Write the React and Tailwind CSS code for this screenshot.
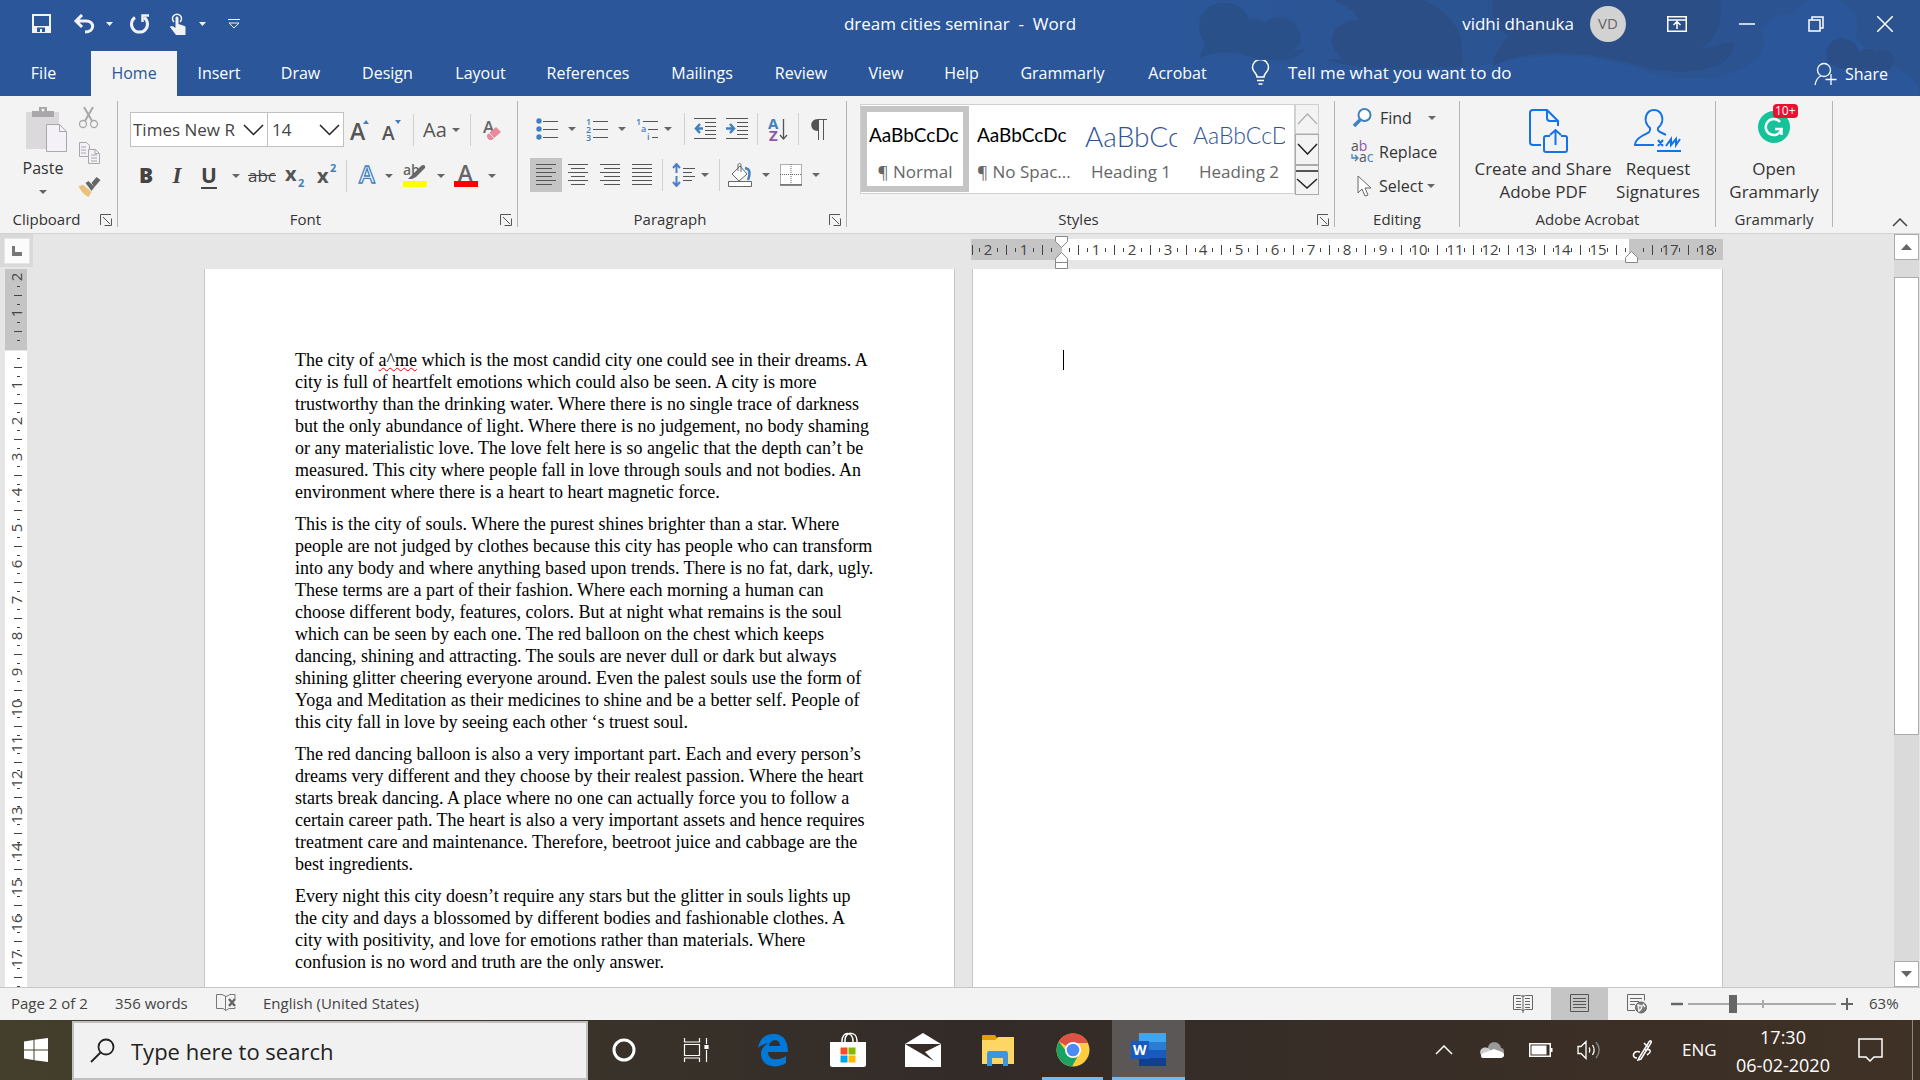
import React, { useState } from "react";

const tabs = [
  { name: "File", width: "w-[91px] pr-1" },
  { name: "Home", width: "w-[86px]" },
  { name: "Insert", width: "w-[84px]" },
  { name: "Draw", width: "w-[79px]" },
  { name: "Design", width: "w-[95px]" },
  { name: "Layout", width: "w-[91px]" },
  { name: "References", width: "w-[124px]" },
  { name: "Mailings", width: "w-[104px]" },
  { name: "Review", width: "w-[94px]" },
  { name: "View", width: "w-[76px]" },
  { name: "Help", width: "w-[75px]" },
  { name: "Grammarly", width: "w-[127px]" },
  { name: "Acrobat", width: "w-[103px]" },
];

const paragraphs = [
  [
    "city is full of heartfelt emotions which could also be seen. A city is more",
    "trustworthy than the drinking water. Where there is no single trace of darkness",
    "but the only abundance of light. Where there is no judgement, no body shaming",
    "or any materialistic love. The love felt here is so angelic that the depth can’t be",
    "measured. This city where people fall in love through souls and not bodies. An",
    "environment where there is a heart to heart magnetic force.",
  ],
  [
    "This is the city of souls. Where the purest shines brighter than a star. Where",
    "people are not judged by clothes because this city has people who can transform",
    "into any body and where anything based upon trends. There is no fat, dark, ugly.",
    "These terms are a part of their fashion. Where each morning a human can",
    "choose different body, features, colors. But at night what remains is the soul",
    "which can be seen by each one. The red balloon on the chest which keeps",
    "dancing, shining and attracting. The souls are never dull or dark but always",
    "shining glitter cheering everyone around. Even the palest souls use the form of",
    "Yoga and Meditation as their medicines to shine and be a better self. People of",
    "this city fall in love by seeing each other ‘s truest soul.",
  ],
  [
    "The red dancing balloon is also a very important part. Each and every person’s",
    "dreams very different and they choose by their realest passion. Where the heart",
    "starts break dancing. A place where no one can actually force you to follow a",
    "certain career path. The heart is also a very important assets and hence requires",
    "treatment care and maintenance. Therefore, beetroot juice and cabbage are the",
    "best ingredients.",
  ],
  [
    "Every night this city doesn’t require any stars but the glitter in souls lights up",
    "the city and days a blossomed by different bodies and fashionable clothes. A",
    "city with positivity, and love for emotions rather than materials. Where",
    "confusion is no word and truth are the only answer.",
  ],
];

const styles = [
  { name: "¶ Normal", sample: "AaBbCcDc", look: "text-[19px] text-black font-['Lato']" },
  { name: "¶ No Spac...", sample: "AaBbCcDc", look: "text-[19px] text-black font-['Lato']" },
  { name: "Heading 1", sample: "AaBbCc", look: "text-[28px] text-[#2f5496] font-light font-['Lato']" },
  { name: "Heading 2", sample: "AaBbCcD", look: "text-[23px] text-[#2f5496] font-light font-['Lato']" },
];

const Arrow = ({ className = "w-4" }) => (
  <button aria-label="More options" className={`flex h-8 shrink-0 items-center justify-center ${className}`}>
    <svg width="8" height="4" viewBox="0 0 8 4">
      <path d="M0 0h8L4 4z" fill="#666" />
    </svg>
  </button>
);

const Tool = ({ label, className = "w-8", children }) => (
  <button aria-label={label} className={`flex h-[34px] shrink-0 items-center justify-center ${className}`}>
    {children}
  </button>
);

const Rule = ({ className = "" }) => <div className={`h-8 w-px shrink-0 bg-[#d0d0d0] ${className}`}></div>;

const Group = ({ label, launcher, className, children }) => (
  <section className={`relative flex shrink-0 flex-col border-r border-[#b5b5b5] ${className}`}>
    <div className="min-h-0 flex-1">{children}</div>
    <div className={`text-center text-[15px] leading-4 text-[#333] ${launcher ? "pr-6" : ""}`}>{label}</div>
    {launcher && (
      <button aria-label={`${label} settings`} className="absolute right-[5px] bottom-px">
        <svg width="12" height="12" viewBox="0 0 12 12" fill="none" stroke="#555">
          <path d="M.5 11V.5H11M3 3l7 7M11.5 4.500v7h-7" />
        </svg>
      </button>
    )}
  </section>
);

const Lines = ({ rows }) => (
  <svg width="20" height="22" viewBox="0 0 20 22" stroke="#555">
    {rows.map(([a, b], i) => (
      <path key={i} d={`M${a} ${i * 4 + 0.5}H${b}`} />
    ))}
  </svg>
);

/* Blue waves and clouds behind the title bar */
const Backdrop = () => (
  <svg className="absolute top-0 right-0" width="770" height="96" viewBox="1150 0 770 96">
    <defs>
      <linearGradient id="haze" x1="0" x2="1">
        <stop offset="0" stopColor="#2b579a" />
        <stop offset=".3" stopColor="#2b5493" />
        <stop offset="1" stopColor="#2b5390" />
      </linearGradient>
    </defs>
    <path d="M1150 0h770v96h-770z" fill="url(#haze)" />
    <path d="M1150 62C1250 50 1420 90 1500 60 1600 50 1600 60 1660 75S1780 60 1760 30C1780 5 1785 20 1795 12 1810 -15 1870 0 1855 35 1870 60 1920 70 1920 96H1150z" fill="#2b579a" />
    <path
      d="M1200 58C1201 49 1206 46 1204 42 1190 19 1209 1 1226 3c12 0 21 8 23 17 6-3 13 0 16 4 5-11 36-9 36 15 0 5-4 9-9 11 5 0 9 0 13-2-5 17-45 13-60 7-18-5-34-3-45 3z"
      fill="#2a508a"
    />
    <g fill="#2a4e85">
      <path d="M1335 0h87c28 11 42 31 40 57 3 6-2 10-8 10-38 0-79 7-127-7 8-1 15 1 14-3C1320 39 1339 18 1359 21 1357 11 1346 7 1335 0z" />
      <path d="M1493 0h227c3 25-5 42-20 48 13 1 24-7 33-5 5 28-54 34-88 24-51-13-103-23-152-1 0-9 8-24 16-29-12-7-19-18-16-37z" />
      <path d="M1828 63c-8-29 24-33 32-10 6-7 13-4 15 0 17-9 23 5 15 17-16 3-41 4-62-7z" />
    </g>
  </svg>
);

const TitleBar = () => (
  <div className="relative flex h-[51px] items-center justify-between pb-1 text-[17px] text-white">
    <div className="flex items-center pl-8">
      <button aria-label="Save">
        <svg width="19" height="19" viewBox="0 0 19 19">
          <path d="M1 1h17v17H1z" fill="none" stroke="#f2f2f2" strokeWidth="2" />
          <path d="M1 12h17v6H1z" fill="#f2f2f2" />
          <path d="M5 13.500h8V18H10v-3H8v3H5z" fill="#2b579a" />
        </svg>
      </button>
      <button aria-label="Undo" className="ml-[22px]">
        <svg width="22" height="20" viewBox="0 0 22 20" fill="none" stroke="#f2f2f2" strokeWidth="3">
          <path d="M9 1 3 7l6 6M3 7h10c9 0 9 11-1 11" />
        </svg>
      </button>
      <svg className="ml-[11px]" width="7" height="4" viewBox="0 0 7 4">
        <path d="M0 0h7L3.500 4z" fill="#f2f2f2" />
      </svg>
      <button aria-label="Repeat" className="ml-4">
        <svg width="21" height="20" viewBox="0 0 21 20" fill="none" stroke="#f2f2f2" strokeWidth="3">
          <path d="M6 3.500a8 8 0 1 0 9 0" />
          <path d="M20 1.500h-6.500V8" strokeWidth="2.500" />
        </svg>
      </button>
      <button aria-label="Touch mode" className="ml-5">
        <svg width="16" height="22" viewBox="0 0 16 22">
          <path d="M4 9a4.500 4.500 0 1 1 6 0" fill="none" stroke="#f2f2f2" strokeWidth="1.500" />
          <path d="M5.500 5c0-2 3-2 3 0v6l6 2c1 .5 1 1 1 2v7H6L0 14c1-2 3-1 5.500 1z" fill="#f2f2f2" />
        </svg>
      </button>
      <svg className="ml-[13px]" width="7" height="4" viewBox="0 0 7 4">
        <path d="M0 0h7L3.500 4z" fill="#f2f2f2" />
      </svg>
      <button aria-label="Customize toolbar" className="ml-[22px]">
        <svg width="12" height="10" viewBox="0 0 12 10" fill="none" stroke="#f2f2f2">
          <path d="M0 .5h12M1 4l5 5 5-5z" />
        </svg>
      </button>
    </div>
    <h1 className="absolute inset-x-0 mx-auto w-fit whitespace-pre">dream cities seminar  -  Word</h1>
    <div className="flex items-center pr-[27px]">
      <span>vidhi dhanuka</span>
      <span className="ml-4 flex size-9 items-center justify-center rounded-full bg-[#d2d2d2] text-[15px] text-[#666]">VD</span>
      <button aria-label="Ribbon display" className="ml-[41px]">
        <svg width="20" height="16" viewBox="0 0 20 16" fill="none" stroke="#fff" strokeWidth="1.500">
          <path d="M.75.75h18.500v14.500H.75zM1 4h18M10 13V6M6.500 9 10 5.500 13.500 9" />
        </svg>
      </button>
      <button aria-label="Minimize" className="ml-[52px] h-4">
        <svg width="16" height="16" viewBox="0 0 16 16" stroke="#fff" strokeWidth="1.500">
          <path d="M0 8h16" />
        </svg>
      </button>
      <button aria-label="Restore" className="ml-[53px]">
        <svg width="16" height="16" viewBox="0 0 16 16" fill="none" stroke="#fff" strokeWidth="1.500">
          <path d="M1 4h11v11H1zM4 4V1h11v11h-3" />
        </svg>
      </button>
      <button aria-label="Close" className="ml-[53px]">
        <svg width="16" height="16" viewBox="0 0 16 16" stroke="#fff" strokeWidth="1.500">
          <path d="m0 0 16 16M16 0 0 16" />
        </svg>
      </button>
    </div>
  </div>
);

const TabBar = ({ active, onSelect }) => (
  <nav className="relative flex h-[45px] items-stretch text-[16px] text-white">
    {tabs.map((tab) => (
      <button
        key={tab.name}
        onClick={() => onSelect(tab.name)}
        className={`shrink-0 pb-[2px] ${tab.width} ${active === tab.name ? "bg-[#f3f3f3] text-[#2b579a]" : ""}`}
      >
        {tab.name}
      </button>
    ))}
    <button className="ml-[22px] flex shrink-0 items-center pb-[2px] text-[17px]">
      <svg width="19" height="25" viewBox="0 0 19 25" fill="none" stroke="#fff" strokeWidth="1.500">
        <path d="M6 17c0-4-4.500-5-4.500-9.500a8 8 0 0 1 16 0C17.500 12 13 13 13 17zM6 20.500h7M7.500 24h4" />
      </svg>
      <span className="ml-[18px]">Tell me what you want to do</span>
    </button>
    <button className="mr-8 ml-auto flex shrink-0 items-center pb-1">
      <svg className="mt-1" width="23" height="24" viewBox="0 0 23 24" fill="none" stroke="#fff" strokeWidth="1.300">
        <circle cx="10" cy="8" r="6.500" />
        <path d="M1 23c1-5 3-8 6-9M17 12v11M11.500 17.500h11" />
      </svg>
      <span className="ml-2 pt-1">Share</span>
    </button>
  </nav>
);

const Clipboard = () => (
  <Group label="Clipboard" launcher className="w-[118px]">
    <div className="flex pt-[6px] pl-5">
      <button className="flex w-[46px] flex-col items-center text-[16px] text-[#333]">
        <svg className="ml-2" width="42" height="46" viewBox="0 0 42 46">
          <path d="M0 5h33v37H0z" fill="#dcd9dc" />
          <path d="M6 4h7V0h8v4h7v6H6z" fill="#a9a7a9" />
          <circle cx="17" cy="3" r="1.500" fill="#f3f3f3" />
          <path d="M20.500 17.500h13l7 7v20h-20z" fill="#f5f1f8" stroke="#a9a7a9" />
          <path d="M33.500 17.500v7h7" fill="none" stroke="#a9a7a9" />
        </svg>
        <span className="mt-[3px] leading-6">Paste</span>
        <Arrow className="-mt-1 h-6 w-6" />
      </button>
      <div className="ml-3 flex flex-col gap-[13px]">
        <button aria-label="Cut">
          <svg width="22" height="22" viewBox="0 0 22 22" fill="none" stroke="#a9a7a9" strokeWidth="2">
            <path d="M6 0l8 14M15 0 7 14" />
            <circle cx="5" cy="17" r="3.500" strokeWidth="1.300" />
            <circle cx="16" cy="17" r="3.500" strokeWidth="1.300" />
          </svg>
        </button>
        <button aria-label="Copy">
          <svg width="22" height="22" viewBox="0 0 22 22" fill="#f5f1f8" stroke="#a9a7a9">
            <path d="M1.500.5h7l3 3v11h-10zM3 5h5M3 8h5M3 11h5" />
            <path d="M10.500 7.500h7l4 4v10h-11zM17 7.500v4h4M13 13h6M13 16h6M13 19h6" />
          </svg>
        </button>
        <button aria-label="Format painter">
          <svg width="23" height="20" viewBox="0 0 22 20">
            <path d="M0 9 5 8l8 7-3 5C6 18 2 14 0 9z" fill="#eac07c" />
            <path d="m7 6 3-2 6 6-3 4zM13 6l5-6 4 3-6 7z" fill="#666" />
          </svg>
        </button>
      </div>
    </div>
  </Group>
);

const FontGroup = () => (
  <Group label="Font" launcher className="w-[400px]">
    <div className="flex items-center pt-[11px] pl-3">
      <label className="flex h-[35px] w-[138px] items-center border border-[#c1c1c1] bg-white text-[#444]">
        <input aria-label="Font name" defaultValue="Times New R" className="w-[112px] bg-transparent pl-[2px] text-[17px] outline-none" />
        <svg className="shrink-0" width="21" height="12" viewBox="0 0 21 12" fill="none" stroke="#222" strokeWidth="1.500">
          <path d="m1 1 9.500 9.500L20 1" />
        </svg>
      </label>
      <label className="-ml-px flex h-[35px] w-[77px] items-center border border-[#c1c1c1] bg-white text-[#444]">
        <input aria-label="Font size" defaultValue="14" className="w-[51px] bg-transparent pl-1 text-[17px] outline-none" />
        <svg className="shrink-0" width="21" height="12" viewBox="0 0 21 12" fill="none" stroke="#222" strokeWidth="1.500">
          <path d="m1 1 9.500 9.500L20 1" />
        </svg>
      </label>
      <Tool label="Grow font">
        <svg className="overflow-visible" width="20" height="24" viewBox="0 0 20 24" fontWeight="600">
          <text x="0" y="22" fontSize="23" fill="#555">A</text>
          <path d="m13 6 3-4 3 4z" fill="#4180bd" />
        </svg>
      </Tool>
      <Tool label="Shrink font">
        <svg className="overflow-visible" width="20" height="24" viewBox="0 0 20 24" fontWeight="600">
          <text x="0" y="22" fontSize="19" fill="#555">A</text>
          <path d="m13 2 3 4 3-4z" fill="#4180bd" />
        </svg>
      </Tool>
      <Rule className="mr-2 ml-[5px]" />
      <Tool label="Change case" className="w-[26px] text-[20px] text-[#555]">Aa</Tool>
      <Arrow />
      <Rule className="mr-3 ml-[6px]" />
      <Tool label="Clear formatting" className="w-5">
        <svg className="overflow-visible" width="20" height="24" viewBox="0 0 20 24">
          <text x="0" y="15" fontSize="17" fontWeight="600" fill="#666">A</text>
          <path d="m4 17 9-8 5 5-9 8H6l-2-3z" fill="#e88a9a" />
          <path d="m6 15 5 5" stroke="#f3f3f3" />
        </svg>
      </Tool>
    </div>
    <div className="mt-3 flex items-center pl-3 text-[21px] text-[#444]">
      <Tool label="Bold" className="w-8 font-extrabold">B</Tool>
      <Tool label="Italic" className="w-[30px] font-['Liberation_Serif'] text-[23px] font-bold italic">I</Tool>
      <Tool label="Underline" className="w-[34px] font-bold underline underline-offset-4">U</Tool>
      <Arrow className="w-5" />
      <Tool label="Strikethrough" className="w-8 text-[17px] line-through">abc</Tool>
      <Tool label="Subscript" className="w-[34px]">
        <svg className="overflow-visible" width="20" height="26" viewBox="0 0 20 26" fontWeight="700">
          <text x="0" y="18" fontSize="20" fill="#555">x</text>
          <text x="13" y="24" fontSize="11" fill="#4180bd">2</text>
        </svg>
      </Tool>
      <Tool label="Superscript" className="w-[30px]">
        <svg className="overflow-visible" width="20" height="26" viewBox="0 0 20 26" fontWeight="700">
          <text x="0" y="20" fontSize="20" fill="#555">x</text>
          <text x="13" y="9" fontSize="11" fill="#4180bd">2</text>
        </svg>
      </Tool>
      <Rule className="ml-1" />
      <Tool label="Text effects" className="w-10">
        <svg className="overflow-visible" width="22" height="26" viewBox="0 0 22 26">
          <text x="3" y="20" fontSize="24" fontWeight="600" fill="#fff" stroke="#4180bd" strokeWidth="1.300">A</text>
        </svg>
      </Tool>
      <Arrow className="-ml-1 w-3" />
      <Tool label="Highlight" className="ml-[6px] w-7">
        <svg className="overflow-visible" width="24" height="26" viewBox="0 0 24 26">
          <text x="0" y="12" fontSize="14" fontWeight="600" fill="#666">ab</text>
          <path d="m5 16 4-4 9-9c2-2 5-1 4 2l-9 9-4 2z" fill="#666" />
          <path d="M0 18h24v6H0z" fill="#ff0" />
        </svg>
      </Tool>
      <Arrow className="w-[23px]" />
      <Tool label="Font color" className="w-7">
        <svg className="overflow-visible" width="24" height="26" viewBox="0 0 24 26">
          <text x="4" y="18" fontSize="22" fontWeight="600" fill="#666">A</text>
          <path d="M0 18h24v6H0z" fill="#f00" />
        </svg>
      </Tool>
      <Arrow className="w-[23px]" />
    </div>
  </Group>
);

const Paragraph = () => (
  <Group label="Paragraph" launcher className="w-[329px]">
    <div className="flex items-center pt-[11px] pl-[18px]">
      <Tool label="Bullets" className="w-[22px]">
        <svg width="22" height="22" viewBox="0 0 22 22" stroke="#555">
          <g fill="#4180bd" stroke="none">
            <circle cx="3" cy="3" r="2.700" />
            <circle cx="3" cy="11" r="2.700" />
            <circle cx="3" cy="19" r="2.700" />
          </g>
          <path d="M7 3.500h15M7 11.500h15M7 19.500h15" />
        </svg>
      </Tool>
      <Arrow className="w-7" />
      <Tool label="Numbering" className="w-[22px]">
        <svg className="overflow-visible" width="22" height="24" viewBox="0 0 22 24" stroke="#555">
          <g fill="#4180bd" stroke="none" fontSize="9" fontWeight="600">
            <text x="0" y="8">1</text>
            <text x="0" y="16">2</text>
            <text x="0" y="24">3</text>
          </g>
          <path d="M7 4.500h15M7 12.500h15M7 20.500h15" />
        </svg>
      </Tool>
      <Arrow className="w-7" />
      <Tool label="Multilevel list" className="w-[22px]">
        <svg className="overflow-visible" width="22" height="24" viewBox="0 0 22 24" stroke="#555">
          <g fill="#4180bd" stroke="none" fontSize="9" fontWeight="600">
            <text x="0" y="8">1</text>
            <text x="5" y="15">a</text>
            <text x="11" y="23">i</text>
          </g>
          <path d="M7 4.500h15M12 12.500h10M16 20.500h6" />
        </svg>
      </Tool>
      <Arrow className="w-5" />
      <Rule className="ml-[6px]" />
      <Tool label="Decrease indent" className="ml-1 w-8">
        <svg width="22" height="22" viewBox="0 0 22 22" stroke="#555">
          <path d="M0 .5h22M11 4.500h11M11 8.500h11M11 12.500h11M11 16.500h11M0 20.500h22" />
          <path d="M9 10.500H2M6 6l-4 4.500L6 15" fill="none" stroke="#4180bd" strokeWidth="2.500" />
        </svg>
      </Tool>
      <Tool label="Increase indent">
        <svg width="22" height="22" viewBox="0 0 22 22" stroke="#555">
          <path d="M0 .5h22M11 4.500h11M11 8.500h11M11 12.500h11M11 16.500h11M0 20.500h22" />
          <path d="M0 10.500h7M4 6l4 4.500L4 15" fill="none" stroke="#4180bd" strokeWidth="2.500" />
        </svg>
      </Tool>
      <Rule className="ml-1" />
      <Tool label="Sort" className="w-10">
        <svg className="overflow-visible" width="20" height="26" viewBox="0 0 20 26" fontSize="15" fontWeight="700">
          <text x="0" y="13" fill="#4180bd">A</text>
          <text x="1" y="25" fill="#8e55a9">Z</text>
          <path d="M15.500 3v20M12 19l3.500 4 3.500-4" fill="none" stroke="#555" strokeWidth="1.300" />
        </svg>
      </Tool>
      <Rule />
      <Tool label="Show marks" className="w-10">
        <svg width="16" height="21" viewBox="0 0 16 21">
          <path d="M7 12C-2 12-2 0 7 0h9v1h-3v20h-1V1H8v20H7z" fill="#555" />
        </svg>
      </Tool>
    </div>
    <div className="mt-3 flex items-center pl-3">
      <Tool label="Align left" className="w-8 bg-[#c5c5c5]">
        <Lines rows={[[0, 20], [0, 16], [0, 20], [0, 16], [0, 20], [0, 16]]} />
      </Tool>
      <Tool label="Center">
        <Lines rows={[[0, 20], [3, 17], [0, 20], [3, 17], [0, 20], [3, 17]]} />
      </Tool>
      <Tool label="Align right">
        <Lines rows={[[0, 20], [4, 20], [0, 20], [4, 20], [0, 20], [4, 20]]} />
      </Tool>
      <Tool label="Justify">
        <Lines rows={[[0, 20], [0, 20], [0, 20], [0, 20], [0, 20], [0, 20]]} />
      </Tool>
      <Rule className="ml-1" />
      <Tool label="Line spacing" className="ml-2 w-6">
        <svg width="23" height="24" viewBox="0 0 23 24" fill="none" stroke="#555">
          <path d="M11 5.500h12M11 9.500h9M11 13.500h12M11 17.500h9" />
          <path d="M4.500 10V2M1 5l3.500-4L8 5M4.500 13v9M1 19l3.500 4L8 19" stroke="#4a7fc9" strokeWidth="2" />
        </svg>
      </Tool>
      <Arrow className="w-5" />
      <Rule className="ml-1" />
      <Tool label="Shading" className="ml-2 w-6">
        <svg width="24" height="24" viewBox="0 0 24 24" fill="#fff" stroke="#666">
          <path d="m4 11 8-8 7 8-8 7z" />
          <path d="M10 8V2c0-2 3-2 3 0v7" fill="none" />
          <path d="M17 5c6 1 5 7 3 12" fill="none" stroke="#4180bd" strokeWidth="2.500" />
          <path d="M.5 18.500h23v5H.5z" />
        </svg>
      </Tool>
      <Arrow className="w-7" />
      <Tool label="Borders" className="w-[22px]">
        <svg width="22" height="22" viewBox="0 0 22 22" fill="#fff" stroke="#666">
          <path d="M.5.5h21v20H.5zM11 0v20M0 10.500h22" strokeDasharray="1 1" />
          <path d="M0 21h22" strokeWidth="1.500" />
        </svg>
      </Tool>
      <Arrow className="w-7" />
    </div>
  </Group>
);

const Styles = () => (
  <Group label="Styles" launcher className="w-[488px]">
    <div className="flex pt-[3px] pl-[13px]">
      <div className="flex h-[90px] border border-[#d0d0d0] bg-white p-px pl-0">
        {styles.map((style, i) => (
          <button
            key={style.name}
            className={`flex w-[108px] flex-col border-[6px] px-[2px] text-[17px] text-[#666] ${
              i === 0 ? "border-[#c5c5c5]" : "border-transparent"
            }`}
          >
            <span className={`flex h-11 w-full items-center overflow-hidden pt-1 text-left ${style.look}`}>{style.sample}</span>
            <span className="w-full pt-[3px] text-center leading-7 whitespace-nowrap">{style.name}</span>
          </button>
        ))}
      </div>
      <div className="flex h-[91px] w-6 flex-col">
        <button aria-label="Previous styles" className="flex flex-1 items-center justify-center border border-[#d0d0d0]">
          <svg width="21" height="12" viewBox="0 0 21 12" fill="none" stroke="#b0b0b0" strokeWidth="1.300">
            <path d="m1 11 9.500-10L20 11" />
          </svg>
        </button>
        <button aria-label="Next styles" className="flex flex-1 items-center justify-center border border-[#aaa]">
          <svg width="21" height="12" viewBox="0 0 21 12" fill="none" stroke="#222" strokeWidth="1.500">
            <path d="m1 1 9.500 10L20 1" />
          </svg>
        </button>
        <button aria-label="All styles" className="flex flex-1 items-center justify-center border border-[#aaa]">
          <svg width="22" height="20" viewBox="0 0 22 20" fill="none" stroke="#222" strokeWidth="1.500">
            <path d="M0 1h22M1 9l10 9 10-9" />
          </svg>
        </button>
      </div>
    </div>
  </Group>
);

const Editing = () => (
  <Group label="Editing" className="w-[125px]">
    <div className="flex flex-col pl-4 text-[16px] text-[#333]">
      <button className="flex h-[34px] items-center">
        <svg className="ml-px" width="20" height="20" viewBox="0 0 20 20" fill="none" stroke="#4180bd">
          <circle cx="12.500" cy="7" r="6" strokeWidth="2" fill="#fff" />
          <path d="m8 12-6 6" strokeWidth="3.500" />
        </svg>
        <span className="ml-2">Find</span>
        <svg className="ml-4" width="8" height="4" viewBox="0 0 8 4">
          <path d="M0 0h8L4 4z" fill="#666" />
        </svg>
      </button>
      <button className="flex h-[34px] items-center">
        <svg className="overflow-visible" width="24" height="24" viewBox="0 0 24 24" fontSize="14" fill="#555">
          <text x="0" y="11">a<tspan fill="#8e55a9">b</tspan></text>
          <text x="8" y="22">a<tspan fill="#4180bd">c</tspan></text>
          <path d="M1 14v4h5M4 15l3 3-3 3" fill="none" stroke="#4180bd" strokeWidth="1.300" />
        </svg>
        <span className="ml-1">Replace</span>
      </button>
      <button className="flex h-[34px] items-center">
        <svg className="ml-[6px]" width="15" height="22" viewBox="0 0 15 22" fill="#fff" stroke="#666">
          <path d="M1 1v17l4-4 3 7 3-1-3-7h6z" />
        </svg>
        <span className="ml-[7px]">Select</span>
        <svg className="ml-1" width="8" height="4" viewBox="0 0 8 4">
          <path d="M0 0h8L4 4z" fill="#666" />
        </svg>
      </button>
    </div>
  </Group>
);

const Acrobat = () => (
  <Group label="Adobe Acrobat" className="w-[256px]">
    <div className="flex pt-2 pl-3 text-[17px] leading-[23px] text-[#333]">
      <button className="flex w-[142px] shrink-0 flex-col items-center">
        <svg className="ml-3" width="40" height="44" viewBox="0 0 40 44" fill="none" stroke="#1473e6" strokeWidth="2">
          <path d="M12 36H4c-2 0-3-1-3-3V4c0-2 1-3 3-3h14l11 11v5M18 1v8c0 2 1 3 3 3h8" />
          <path d="M21 27h-4c-1 0-2 1-2 2v12c0 1 1 2 2 2h19c1 0 2-1 2-2V29c0-1-1-2-2-2h-4M26.500 36V21M21 26l5.500-5 5.500 5" />
        </svg>
        <span className="mt-1 whitespace-nowrap">Create and Share</span>
        <span>Adobe PDF</span>
      </button>
      <button className="flex w-[88px] shrink-0 flex-col items-center">
        <svg width="48" height="44" viewBox="0 0 48 44" fill="none" stroke="#1473e6" strokeWidth="2">
          <path d="M32 26c-5-3-9-3-8-7 8-7 4-18-4-18s-12 11-4 18c1 5-3 5-8 8s-7 5-7 9h19" />
          <path d="m24 31 5 6M29 31l-5 6M32 37l5-7v6l5-6v6l4-6M23 42h24" />
        </svg>
        <span className="mt-1">Request</span>
        <span>Signatures</span>
      </button>
    </div>
  </Group>
);

const Grammarly = () => (
  <Group label="Grammarly" className="w-[117px]">
    <button className="relative flex w-full flex-col items-center pt-[10px] text-[17px] leading-[23px] text-[#333]">
      <svg width="32" height="32" viewBox="0 0 32 32" fill="none" stroke="#fff" strokeWidth="2.500">
        <circle cx="16" cy="16" r="16" fill="#15c39a" stroke="none" />
        <path d="M22 11a8 8 0 1 0 1.500 7H17M23.500 17v7" />
      </svg>
      <span className="absolute top-[3px] left-[57px] rounded bg-[#eb1030] px-[2px] text-[12px] leading-[14px] text-white">10+</span>
      <span className="mt-[14px]">Open</span>
      <span>Grammarly</span>
    </button>
  </Group>
);

const Ribbon = () => (
  <div className="flex h-[138px] shrink-0 border-b border-[#d2d2d2] bg-[#f3f3f3] pt-[5px] pb-[6px]">
    <Clipboard />
    <FontGroup />
    <Paragraph />
    <Styles />
    <Editing />
    <Acrobat />
    <Grammarly />
    <button aria-label="Collapse ribbon" className="mt-auto mr-3 ml-auto">
      <svg width="16" height="9" viewBox="0 0 16 9" fill="none" stroke="#444" strokeWidth="1.500">
        <path d="m1 8 7-7 7 7" />
      </svg>
    </button>
  </div>
);

const PITCH = 35.87;
const quarters = (from, to) => {
  const marks = [];
  for (let q = from; q <= to; q++) marks.push(q);
  return marks;
};

const HorizontalRuler = () => (
  <svg width="752" height="38" viewBox="0 0 752 38" fontSize="15" fill="#444" className="block">
    <path d="M0 5h752v21H0z" fill="#c5c5c5" />
    <path d="M91 5h567v21H91z" fill="#fff" />
    {quarters(-9, 73).map((q) => {
      const x = Math.round(89 + (q * PITCH) / 4);
      if (q === 0 || q === 64) return null;
      if (q % 4 === 0)
        return (
          <text key={q} x={x} y="21" textAnchor="middle">
            {Math.abs(q / 4)}
          </text>
        );
      return <path key={q} d={q % 2 === 0 ? `M${x} 11h1v10h-1z` : `M${x} 14h1v4h-1z`} />;
    })}
    <path d="M1 11h1v10H1z" />
    <g fill="#fff" stroke="#888">
      <path d="M84.500 2.500h12v5l-6 6-6-6zM90.500 18.500l6 6v4h-12v-4zM84.500 28.500h12v6h-12z" />
      <path d="m660.500 17.500 6 6v5h-12v-5z" />
    </g>
  </svg>
);

const VerticalRuler = () => (
  <svg width="22" height="718" viewBox="0 0 22 718" fontSize="15" fill="#444" className="ml-[5px] block">
    <path d="M0 0h22v81H0z" fill="#c5c5c5" />
    <path d="M0 82h22v636H0z" fill="#fff" />
    {quarters(-8, 72).map((q) => {
      const y = Math.round(80 + (q * PITCH) / 4);
      if (q === 0) return null;
      if (q % 4 === 0)
        return (
          <text key={q} transform={`translate(17 ${y}) rotate(-90)`} textAnchor="middle">
            {Math.abs(q / 4)}
          </text>
        );
      return <path key={q} d={q % 2 === 0 ? `M9 ${y}h8v1H9z` : `M12 ${y}h3v1h-3z`} />;
    })}
  </svg>
);

const Workspace = () => (
  <main className="flex min-h-0 flex-1 overflow-hidden border-b border-[#c6c6c6] bg-[#e6e6e6]">
    <div className="w-[33px] shrink-0">
      <div className="mb-[2px] flex h-[33px] items-center justify-center bg-[#d9d9d9]">
        <button aria-label="Tab stop" className="flex size-[26px] items-center justify-center border border-[#e6e6e6] bg-[#fbfbfb]">
          <svg width="10" height="10" viewBox="0 0 10 10">
            <path d="M0 0h3v6h7v4H0z" fill="#777" />
          </svg>
        </button>
      </div>
      <VerticalRuler />
    </div>
    <div className="flex min-w-0 flex-1 justify-center">
      <div className="flex flex-col">
        <div className="flex h-[35px] shrink-0 justify-end">
          <HorizontalRuler />
        </div>
        <div className="flex flex-1 gap-[17px]">
          <article className="w-[751px] border-x border-[#c6c6c6] bg-white pt-20 pl-[90px] font-['Liberation_Serif',serif] text-[18px] leading-[22px] text-black">
            {paragraphs.map((lines, i) => (
              <p key={i} className="mb-[10px] whitespace-nowrap">
                {i === 0 && (
                  <>
                    The city of{" "}
                    <span className="underline decoration-red-600 decoration-wavy decoration-1 underline-offset-1">a^me</span> which is the
                    most candid city one could see in their dreams. A
                    <br />
                  </>
                )}
                {lines.map((line) => (
                  <React.Fragment key={line}>
                    {line}
                    <br />
                  </React.Fragment>
                ))}
              </p>
            ))}
          </article>
          <article className="w-[751px] border-x border-[#c6c6c6] bg-white pt-[81px] pl-[90px]">
            <div className="h-5 w-px bg-black"></div>
          </article>
        </div>
      </div>
    </div>
    <div className="mr-px flex w-[25px] shrink-0 flex-col bg-[#dadada]">
      <button aria-label="Scroll up" className="flex h-[26px] items-center justify-center border border-[#ababab] bg-white">
        <svg width="11" height="6" viewBox="0 0 11 6">
          <path d="M0 6h11L5.500 0z" fill="#666" />
        </svg>
      </button>
      <div className="mt-[17px] h-[458px] border border-[#ababab] bg-white"></div>
      <button aria-label="Scroll down" className="mt-auto flex h-[26px] items-center justify-center border border-[#ababab] bg-white">
        <svg width="11" height="6" viewBox="0 0 11 6">
          <path d="M0 0h11L5.500 6z" fill="#666" />
        </svg>
      </button>
    </div>
  </main>
);

const StatusBar = () => {
  const [zoom, setZoom] = useState(63);
  return (
    <footer className="flex h-8 shrink-0 items-center bg-[#f3f3f3] text-[15px] text-[#444]">
      <span className="ml-[11px] w-[104px] pb-[2px]">Page 2 of 2</span>
      <span className="w-[100px] pb-[2px]">356 words</span>
      <svg className="mb-1" width="23" height="18" viewBox="0 0 23 18" fill="none" stroke="#777">
        <path d="M20 6V1.500h-5l-4 2-4-2H1.500v14H8l3 2 3-2h6V14M10.500 3v14" />
        <path d="m14 6 6 7M20 6l-6 7" strokeWidth="2.500" stroke="#666" />
      </svg>
      <span className="ml-[25px] pb-[2px]">English (United States)</span>
      <div className="ml-auto flex h-full items-center">
        <button aria-label="Read mode" className="flex h-full w-[57px] items-center justify-center pb-[2px]">
          <svg width="20" height="19" viewBox="0 0 20 19" fill="none" stroke="#666">
            <path d="M.5 1.500h7l2.500 1 2.500-1h7v14h-7l-2.500 1-2.500-1h-7zM10 1v18M3 4.500h5M3 7.500h5M3 10.500h5M3 13.500h5M12 4.500h5M12 7.500h5M12 10.500h5M12 13.500h5" />
          </svg>
        </button>
        <button aria-label="Print layout" className="flex h-full w-[57px] items-center justify-center bg-[#c5c5c5] pb-[2px]">
          <svg width="19" height="18" viewBox="0 0 19 18" fill="none" stroke="#555">
            <path d="M.5.5h18v17H.5zM3 4.500h13M3 7.500h13M3 10.500h13M3 13.500h13" />
          </svg>
        </button>
        <button aria-label="Web layout" className="flex h-full w-[57px] items-center justify-center">
          <svg width="20" height="20" viewBox="0 0 20 20" fill="none" stroke="#666">
            <path d="M8 16.500H.5V.5h17v6M3 4.500h12M3 7.500h9M3 10.500h5" />
            <circle cx="14" cy="13.500" r="5.500" fill="#777" />
            <path d="M11 11l4 1-1 3-2 2zM16 10l2 3" stroke="#f3f3f3" strokeWidth="1.500" />
          </svg>
        </button>
        <button aria-label="Zoom out" className="ml-[6px]">
          <svg width="12" height="12" viewBox="0 0 12 12" stroke="#666" strokeWidth="2.500">
            <path d="M0 6h12" />
          </svg>
        </button>
        <div className="relative ml-[5px] flex w-[148px] items-center">
          <input
            type="range"
            aria-label="Zoom"
            min="10"
            max="190"
            value={zoom}
            onChange={(e) => setZoom(Number(e.target.value))}
            className="h-[18px] w-full appearance-none bg-transparent [&::-webkit-slider-runnable-track]:h-[2px] [&::-webkit-slider-runnable-track]:bg-[#aaa] [&::-webkit-slider-thumb]:-mt-2 [&::-webkit-slider-thumb]:h-[18px] [&::-webkit-slider-thumb]:w-2 [&::-webkit-slider-thumb]:appearance-none [&::-webkit-slider-thumb]:bg-[#666]"
          />
          <div className="absolute left-1/2 h-2 w-[2px] bg-[#aaa]"></div>
        </div>
        <button aria-label="Zoom in" className="ml-[5px]">
          <svg width="12" height="12" viewBox="0 0 12 12" stroke="#666" strokeWidth="2">
            <path d="M0 6h12M6 0v12" />
          </svg>
        </button>
        <span className="ml-4 w-[51px] pb-[2px]">{zoom}%</span>
      </div>
    </footer>
  );
};

const TaskButton = ({ label, className = "w-[75px]", children }) => (
  <button aria-label={label} className={`relative flex h-full shrink-0 items-center justify-center ${className}`}>
    {children}
  </button>
);

const Taskbar = () => (
  <div className="flex h-[60px] shrink-0 items-center bg-linear-to-r from-[#443f2c] via-[#332b28] to-[#3f3125] text-white">
    <button aria-label="Start" className="flex w-[72px] shrink-0 justify-center">
      <svg width="24" height="24" viewBox="0 0 24 24" fill="#fff">
        <path d="M0 3.500 9.500 2v9.500H0zM10.500 1.800 24 0v11.500H10.500zM0 12.500h9.500V22L0 20.500zM10.500 12.500H24V24l-13.500-1.800z" />
      </svg>
    </button>
    <label className="flex h-[59px] w-[516px] shrink-0 items-center border-2 border-[#c0c0c0] bg-[#f1f1f1]">
      <svg className="ml-4" width="25" height="25" viewBox="0 0 25 25" fill="none" stroke="#222" strokeWidth="1.800">
        <circle cx="16" cy="9" r="7.500" />
        <path d="M10.500 14.500 1 24" />
      </svg>
      <input
        placeholder="Type here to search"
        aria-label="Search"
        className="ml-4 w-96 bg-transparent pt-[2px] text-[22px] outline-none placeholder:text-[#222]"
      />
    </label>
    <TaskButton label="Cortana" className="w-[72px]">
      <svg width="24" height="24" viewBox="0 0 24 24" fill="none" stroke="#fff" strokeWidth="3">
        <circle cx="12" cy="12" r="10" />
      </svg>
    </TaskButton>
    <TaskButton label="Task view" className="w-[75px] pr-1">
      <svg width="26" height="24" viewBox="0 0 26 24" fill="none" stroke="#fff" strokeWidth="1.200">
        <path d="M1.500 0v4h15V0M1.500 6.500h15v11h-15zM1.500 24v-4h15v4M23.500 0v6M23.500 12v12" />
        <path d="M22 7.500h3v3h-3z" fill="#fff" />
      </svg>
    </TaskButton>
    <TaskButton label="Edge">
      <svg width="32" height="34" viewBox="0 0 32 34">
        <path d="M1 15C3 4 10 1 17 1c10 0 14 8 14 18H11c0 9 11 9 18 4v7c-11 7-25 3-25-9 0-5 3-8 7-11-3 1-7 2-10 5zm11-2h11c0-8-10-7-11 0z" fill="#0078d7" />
      </svg>
    </TaskButton>
    <TaskButton label="Store">
      <svg width="36" height="36" viewBox="0 0 36 36">
        <path d="M12 11V9c0-10 11-10 11 0v2M15 11V8c0-9 12-9 12 1v2" fill="none" stroke="#fff" strokeWidth="1.500" />
        <path d="M0 10h36v23c0 1-1 2-2 2H2c-1 0-2-1-2-2z" fill="#fff" />
        <path d="M10.500 15.500h7v7h-7z" fill="#f25022" />
        <path d="M18.500 15.500h7v7h-7z" fill="#7fba00" />
        <path d="M10.500 23.500h7v7h-7z" fill="#00a4ef" />
        <path d="M18.500 23.500h7v7h-7z" fill="#ffb900" />
      </svg>
    </TaskButton>
    <TaskButton label="Mail">
      <svg width="36" height="34" viewBox="0 0 36 34">
        <path d="M0 11v23h36V11L18 0z" fill="#fff" />
        <path d="M0 11h36L20 19l9 9z" fill="#372b27" />
      </svg>
    </TaskButton>
    <TaskButton label="File Explorer">
      <svg width="32" height="31" viewBox="0 0 32 31">
        <path d="M0 1c0-1 1-1 1-1h12l2 3-2 4H0z" fill="#e2a000" />
        <path d="M0 5h13l3-3h16v27H0z" fill="#fdd663" />
        <path d="M5 31V19c0-2 1-3 2-3h17c1 0 2 1 2 3v12h-5v-8H10v8z" fill="#3a96dd" />
      </svg>
    </TaskButton>
    <TaskButton label="Chrome">
      <svg width="34" height="34" viewBox="0 0 34 34">
        <circle cx="17" cy="17" r="16.500" fill="#ffcd40" />
        <path d="M17 17 3 8.500A16.500 16.500 0 0 1 32 10H17z" fill="#de5246" />
        <path d="M3 8.500A16.500 16.500 0 0 0 16 33.500L23 21l-6-4-7 1z" fill="#1aa260" />
        <circle cx="17" cy="17" r="8" fill="#fff" />
        <circle cx="17" cy="17" r="6.300" fill="#4c8bf5" />
      </svg>
      <span className="absolute bottom-0 h-[3px] w-[61px] bg-[#76b9ed]"></span>
    </TaskButton>
    <TaskButton label="Word" className="ml-[2px] w-[73px] bg-[#5b5757]">
      <svg width="36" height="34" viewBox="0 0 36 34">
        <path d="M8 0h27v9H8z" fill="#41a5ee" />
        <path d="M8 9h27v8H8z" fill="#2b7cd3" />
        <path d="M8 17h27v8H8z" fill="#185abd" />
        <path d="M8 25h27v8H8z" fill="#103f91" />
        <path d="M0 8h18v18H0z" fill="#185abd" />
        <text x="2" y="22" fontSize="14" fontWeight="700" fill="#fff">W</text>
      </svg>
      <span className="absolute bottom-0 h-[3px] w-full bg-[#76b9ed]"></span>
    </TaskButton>
    <div className="ml-auto flex h-full shrink-0 items-center">
      <button aria-label="Hidden icons">
        <svg width="18" height="10" viewBox="0 0 18 10" fill="none" stroke="#fff" strokeWidth="1.500">
          <path d="m1 9 8-8 8 8" />
        </svg>
      </button>
      <svg className="ml-[27px]" width="24" height="16" viewBox="0 0 24 16">
        <path d="M2 14C-2 8 4 5 8 6c1-8 12-7 13 0 3 0 4 4 2 7z" fill="#999" />
        <path d="M1 13c-3-6 3-9 7-7l11 8z" fill="#ccc" />
        <path d="M4 16c-5 0-3-5 0-5l10-4 8 3c4 2 2 6-1 6z" fill="#fff" />
      </svg>
      <svg className="ml-[25px]" width="24" height="14" viewBox="0 0 24 14">
        <path d="M.75.75h20.500v12.500H.75z" fill="none" stroke="#fff" strokeWidth="1.500" />
        <path d="M2.500 2.500h15v9h-15zM22 5h1.500v4H22z" fill="#fff" />
      </svg>
      <svg className="ml-6" width="24" height="20" viewBox="0 0 24 20" fill="none" stroke="#fff" strokeWidth="1.300">
        <path d="M1 6.500h3l5-5v17l-5-5H1zM12 7.500c1 1 1 4 0 5M15.500 5c2 3 2 7 0 10" />
        <path d="M19 2c4 5 4 11 0 16" stroke="#888" />
      </svg>
      <svg className="ml-[31px]" width="22" height="22" viewBox="0 0 22 22" fill="none" stroke="#fff" strokeWidth="1.500">
        <path d="M7 19 17 3c1-2 3-1 2 1L9 20l-3 1zM12 4l3 3M13 11c6-2 7 2 2 5M8 13c-7-2-9 6-3 6M14 6l3 2" />
      </svg>
      <span className="ml-7 w-[47px] text-[17px]">ENG</span>
      <div className="flex w-[108px] flex-col items-center pt-px text-[18px] leading-7">
        <span>17:30</span>
        <span>06-02-2020</span>
      </div>
      <button aria-label="Notifications" className="mr-[29px] ml-[21px]">
        <svg width="25" height="24" viewBox="0 0 25 24" fill="none" stroke="#fff" strokeWidth="1.500">
          <path d="M1 1h23v18h-8l-4 4-4-4H1z" />
        </svg>
      </button>
      <div className="mr-[7px] h-full w-px bg-[#888]"></div>
    </div>
  </div>
);

const App = () => {
  const [active, setActive] = useState("Home");

  return (
    <div className="flex h-screen flex-col overflow-hidden font-['Open_Sans',sans-serif]">
      <header className="relative shrink-0 bg-[#2b579a]">
        <Backdrop />
        <TitleBar />
        <TabBar active={active} onSelect={setActive} />
      </header>
      <Ribbon />
      <Workspace />
      <StatusBar />
      <Taskbar />
    </div>
  );
};

export default App;
